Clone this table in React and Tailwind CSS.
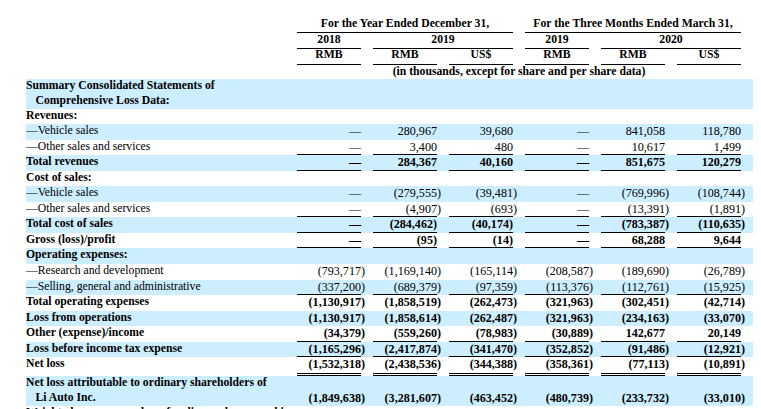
import React from "react";

const SHADE = "bg-[#cceeff]";
const GRID = "grid grid-cols-[271px_repeat(6,64px_12px)]";

// value syntax: "(x)" hangs closing paren into gap; "!(x)" keeps paren inside; "—" dash
const rows = [
  { label: ["Summary Consolidated Statements of", "Comprehensive Loss Data:"], bold: true, shade: true, h: "h-[29.5px]" },
  { label: "Revenues:", bold: true },
  { label: "—Vehicle sales", shade: true, vals: ["—", "280,967", "39,680", "—", "841,058", "118,780"] },
  { label: "—Other sales and services", vals: ["—", "3,400", "480", "—", "10,617", "1,499"], line: "b" },
  { label: "Total revenues", bold: true, shade: true, vals: ["—", "284,367", "40,160", "—", "851,675", "120,279"], line: "b" },
  { label: "Cost of sales:", bold: true },
  { label: "—Vehicle sales", shade: true, vals: ["—", "(279,555)", "(39,481)", "—", "(769,996)", "(108,744)"] },
  { label: "—Other sales and services", vals: ["—", "(4,907)", "(693)", "—", "(13,391)", "(1,891)"], line: "b" },
  { label: "Total cost of sales", bold: true, shade: true, vals: ["—", "!(284,462)", "!(40,174)", "—", "(783,387)", "(110,635)"], line: "b" },
  { label: "Gross (loss)/profit", bold: true, vals: ["—", "!(95)", "!(14)", "—", "68,288", "9,644"], line: "b" },
  { label: "Operating expenses:", bold: true, shade: true },
  { label: "—Research and development", vals: ["(793,717)", "(1,169,140)", "(165,114)", "(208,587)", "(189,690)", "(26,789)"] },
  { label: "—Selling, general and administrative", shade: true, vals: ["(337,200)", "(689,379)", "(97,359)", "(113,376)", "(112,761)", "(15,925)"], line: "b" },
  { label: "Total operating expenses", bold: true, vals: ["(1,130,917)", "(1,858,519)", "(262,473)", "(321,963)", "(302,451)", "(42,714)"] },
  { label: "Loss from operations", bold: true, shade: true, vals: ["(1,130,917)", "(1,858,614)", "(262,487)", "(321,963)", "(234,163)", "(33,070)"] },
  { label: "Other (expense)/income", bold: true, vals: ["(34,379)", "(559,260)", "(78,983)", "(30,889)", "142,677", "20,149"], line: "b" },
  { label: "Loss before income tax expense", bold: true, shade: true, vals: ["(1,165,296)", "(2,417,874)", "(341,470)", "(352,852)", "(91,486)", "(12,921)"], line: "b" },
  { label: "Net loss", bold: true, vals: ["(1,532,318)", "(2,438,536)", "(344,388)", "(358,361)", "(77,113)", "(10,891)"], line: "bb", h: "h-[18.7px]" },
  { label: ["Net loss attributable to ordinary shareholders of", "Li Auto Inc."], bold: true, shade: true, vals: ["(1,849,638)", "(3,281,607)", "(463,452)", "(480,739)", "(233,732)", "(33,010)"], h: "h-[30px]" },
  { label: "Weighted average number of ordinary shares used in", bold: true },
];

function Row({ r }) {
  const h = r.h || "h-[15.55px]";
  const weight = r.bold ? "font-bold" : "font-normal";
  const lineCls =
    r.line === "b"
      ? "border-b border-black"
      : r.line === "bb"
      ? "border-b-[3px] border-double border-black"
      : "";
  const multi = Array.isArray(r.label);
  const cells = [];
  for (let i = 0; i < 6; i++) {
    const v = r.vals ? r.vals[i] : "";
    let main = v;
    let hang = "";
    if (v.startsWith("!")) {
      main = v.slice(1);
    } else if (v.startsWith("(")) {
      main = v.slice(0, -1);
      hang = ")";
    }
    cells.push(
      <div
        key={"n" + i}
        className={`${h} ${r.vals ? lineCls : ""} flex ${multi ? "items-end pb-[1px]" : "items-start"} justify-end text-[12.1px] leading-[14px] whitespace-nowrap ${weight}`}
      >
        {main}
      </div>
    );
    cells.push(
      <div
        key={"g" + i}
        className={`${h} flex ${multi ? "items-end pb-[1px]" : "items-start"} justify-start text-[12.1px] leading-[14px] ${weight}`}
      >
        {hang}
      </div>
    );
  }
  return (
    <div className={`${GRID} ${r.shade ? SHADE : "bg-white"}`}>
      <div className={`${h} text-[11.7px] ${multi ? "leading-[14.75px]" : "leading-[14px]"} whitespace-nowrap ${weight}`}>
        {multi ? (
          <>
            <div>{r.label[0]}</div>
            <div className="pl-[9.5px]">{r.label[1]}</div>
          </>
        ) : (
          r.label
        )}
      </div>
      {cells}
    </div>
  );
}

export default function App() {
  return (
    <div className="w-[761px] h-[409px] overflow-hidden bg-white text-black font-['Liberation_Serif',serif]">
      <div className="ml-[26px] pt-[16px] w-[727px]">
        {/* header row 1 */}
        <div className={`${GRID} font-bold text-[11.7px]`}>
          <div />
          <div className="col-start-2 col-span-5 h-[17px] border-b border-black text-center leading-[15px] whitespace-nowrap">
            For the Year Ended December 31,
          </div>
          <div />
          <div className="col-start-8 col-span-5 h-[17px] border-b border-black text-center leading-[15px] whitespace-nowrap">
            For the Three Months Ended March 31,
          </div>
        </div>
        {/* header row 2 */}
        <div className={`${GRID} font-bold text-[11.7px]`}>
          <div />
          <div className="col-start-2 h-[16px] border-b border-black text-center leading-[13px]">2018</div>
          <div className="col-start-4 col-span-3 h-[16px] border-b border-black text-center leading-[13px]">2019</div>
          <div className="col-start-8 h-[16px] border-b border-black text-center leading-[13px]">2019</div>
          <div className="col-start-10 col-span-3 h-[16px] border-b border-black text-center leading-[13px]">2020</div>
        </div>
        {/* header row 3 */}
        <div className={`${GRID} font-bold text-[11.7px]`}>
          <div />
          <div className="col-start-2 h-[16px] border-b border-black text-center leading-[12px]">RMB</div>
          <div className="col-start-4 h-[16px] border-b border-black text-center leading-[12px]">RMB</div>
          <div className="col-start-6 h-[16px] border-b border-black text-center leading-[12px]">US$</div>
          <div className="col-start-8 h-[16px] border-b border-black text-center leading-[12px]">RMB</div>
          <div className="col-start-10 h-[16px] border-b border-black text-center leading-[12px]">RMB</div>
          <div className="col-start-12 h-[16px] border-b border-black text-center leading-[12px]">US$</div>
        </div>
        {/* header row 4 */}
        <div className={`${GRID} font-bold text-[11.7px]`}>
          <div />
          <div className="col-start-2 col-span-11 h-[14px] text-center leading-[14px] whitespace-nowrap">
            (in thousands, except for share and per share data)
          </div>
        </div>
        {rows.map((r, i) => (
          <Row key={i} r={r} />
        ))}
      </div>
    </div>
  );
}
